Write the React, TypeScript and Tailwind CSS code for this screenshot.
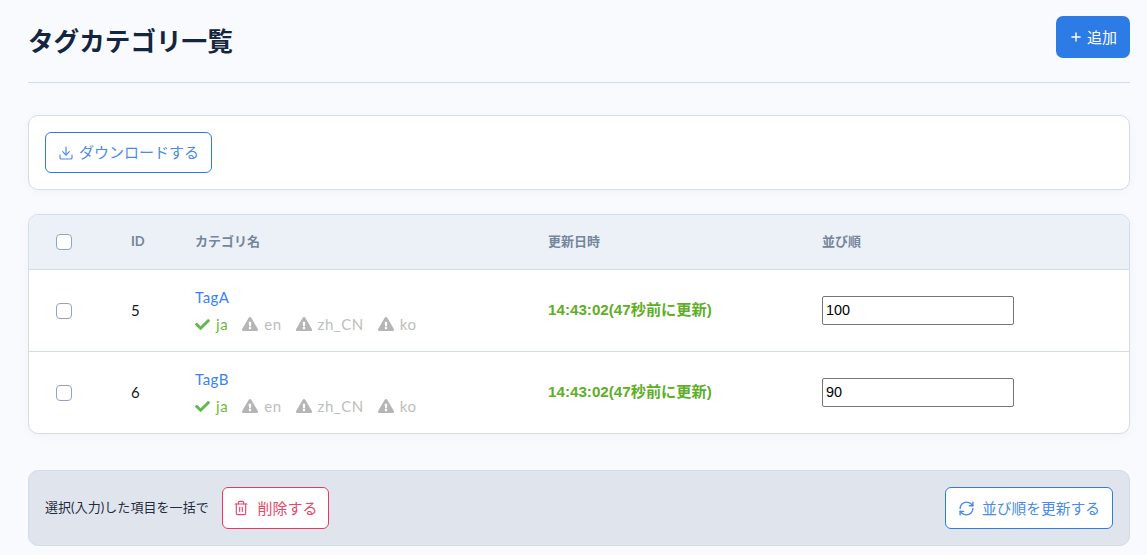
import React from "react";
import { Download, Trash2, RefreshCw, Plus } from "lucide-react";
import { FaCheck, FaExclamationTriangle } from "react-icons/fa";

const FONT = "font-['Lato','Noto_Sans_CJK_JP',sans-serif]";
const COLS = "grid grid-cols-[102px_64px_353px_274px_1fr] items-center";

const rows = [
  { id: 5, name: "TagA", order: "100" },
  { id: 6, name: "TagB", order: "90" },
];

function Checkbox() {
  return <span className="block w-4 h-4 rounded-[4px] border border-[#8fa5c4] bg-white" />;
}

function LangBadge({ label, ok }: { label: string; ok?: boolean }) {
  return (
    <span className={`flex items-center gap-[6px] text-[15px] tracking-[0.55px] leading-5 ${ok ? "text-[#6cba3f]" : "text-[#bdbdbd]"}`}>
      {ok ? <FaCheck className="w-[15px] h-[15px] text-[#62b84f]" /> : <FaExclamationTriangle className="w-4 h-4 text-[#b5b5b5]" />}
      {label}
    </span>
  );
}

function Row({ id, name, order, last }: { id: number; name: string; order: string; last?: boolean }) {
  return (
    <div className={`${COLS} ${last ? "h-[81px]" : "h-[82px] border-b border-[#d3dce9]"}`}>
      <div className="pl-[27px]"><Checkbox /></div>
      <div className="text-[15px] text-[#111827]">{id}</div>
      <div>
        <div className="text-[15px] tracking-[0.5px] leading-5 text-[#3b82f0]">{name}</div>
        <div className="flex gap-[14px] mt-[7px]">
          <LangBadge label="ja" ok />
          <LangBadge label="en" />
          <LangBadge label="zh_CN" />
          <LangBadge label="ko" />
        </div>
      </div>
      <div className="text-[15.2px] font-bold text-[#5fae27] font-['Liberation_Sans','Noto_Sans_CJK_JP',sans-serif]">
        14:43:02(47秒前に更新)
      </div>
      <div>
        <input
          readOnly
          value={order}
          className="block w-[192px] h-[29px] px-[3px] pb-[1px] text-[14.4px] text-black bg-white border border-[#767676] rounded-[2px] font-['Liberation_Sans',sans-serif]"
        />
      </div>
    </div>
  );
}

export default function App() {
  return (
    <div className={`${FONT} h-[555px] overflow-hidden bg-[#f9fafe] pl-[28px] pr-[17px] pt-[16px]`}>
      {/* Header */}
      <div className="flex items-start justify-between h-[67px] border-b border-[#d0dceb]">
        <h1 className="mt-[6px] text-[25.6px] leading-[38px] font-bold text-[#14263f]">タグカテゴリ一覧</h1>
        <button className="flex items-center justify-center gap-[4px] w-[74px] h-[42px] rounded-[7px] bg-[#2d7be5] text-white text-[15px]">
          <Plus className="w-[14px] h-[14px]" strokeWidth={2.5} />
          追加
        </button>
      </div>

      {/* Toolbar */}
      <div className="mt-[32px] h-[75px] flex items-center px-[16px] bg-white border border-[#d3dce9] rounded-[10px] shadow-[0_2px_10px_rgba(60,80,120,0.04)]">
        <button className="flex items-center gap-[5px] h-[41px] w-[167px] justify-center rounded-[6px] border border-[#2d7be5] bg-white text-[15px] text-[#4a8ae8]">
          <Download className="w-4 h-4" strokeWidth={1.75} />
          ダウンロードする
        </button>
      </div>

      {/* Table */}
      <div className="mt-[24px] bg-white border border-[#d3dce9] rounded-[10px] overflow-hidden shadow-[0_2px_10px_rgba(60,80,120,0.04)]">
        <div className={`${COLS} h-[55px] bg-[#ecf1f8] border-b border-[#d3dce9] text-[13px] font-bold text-[#76859b]`}>
          <div className="pl-[27px]"><Checkbox /></div>
          <div>ID</div>
          <div>カテゴリ名</div>
          <div>更新日時</div>
          <div>並び順</div>
        </div>
        {rows.map((r, i) => (
          <Row key={r.id} {...r} last={i === rows.length - 1} />
        ))}
      </div>

      {/* Bulk actions */}
      <div className="mt-[36px] h-[76px] flex items-center justify-between px-[16px] bg-[#e0e5ed] border border-[#d3dce9] rounded-[10px]">
        <div className="flex items-center gap-[13px]">
          <span className="w-[164px] whitespace-nowrap text-[13px] tracking-[0.06px] text-[#1f2c3f]">選択(入力)した項目を一括で</span>
          <button className="flex items-center justify-center gap-[8px] w-[107px] h-[42px] rounded-[6px] border border-[#e8365d] bg-white text-[15px] text-[#e8476b]">
            <Trash2 className="w-4 h-4" strokeWidth={1.75} />
            削除する
          </button>
        </div>
        <button className="flex items-center justify-center gap-[7px] w-[168px] h-[42px] rounded-[6px] border border-[#2d7be5] bg-white text-[14.75px] text-[#4a8ae8]">
          <RefreshCw className="w-[17px] h-[17px]" strokeWidth={2} />
          並び順を更新する
        </button>
      </div>
    </div>
  );
}
